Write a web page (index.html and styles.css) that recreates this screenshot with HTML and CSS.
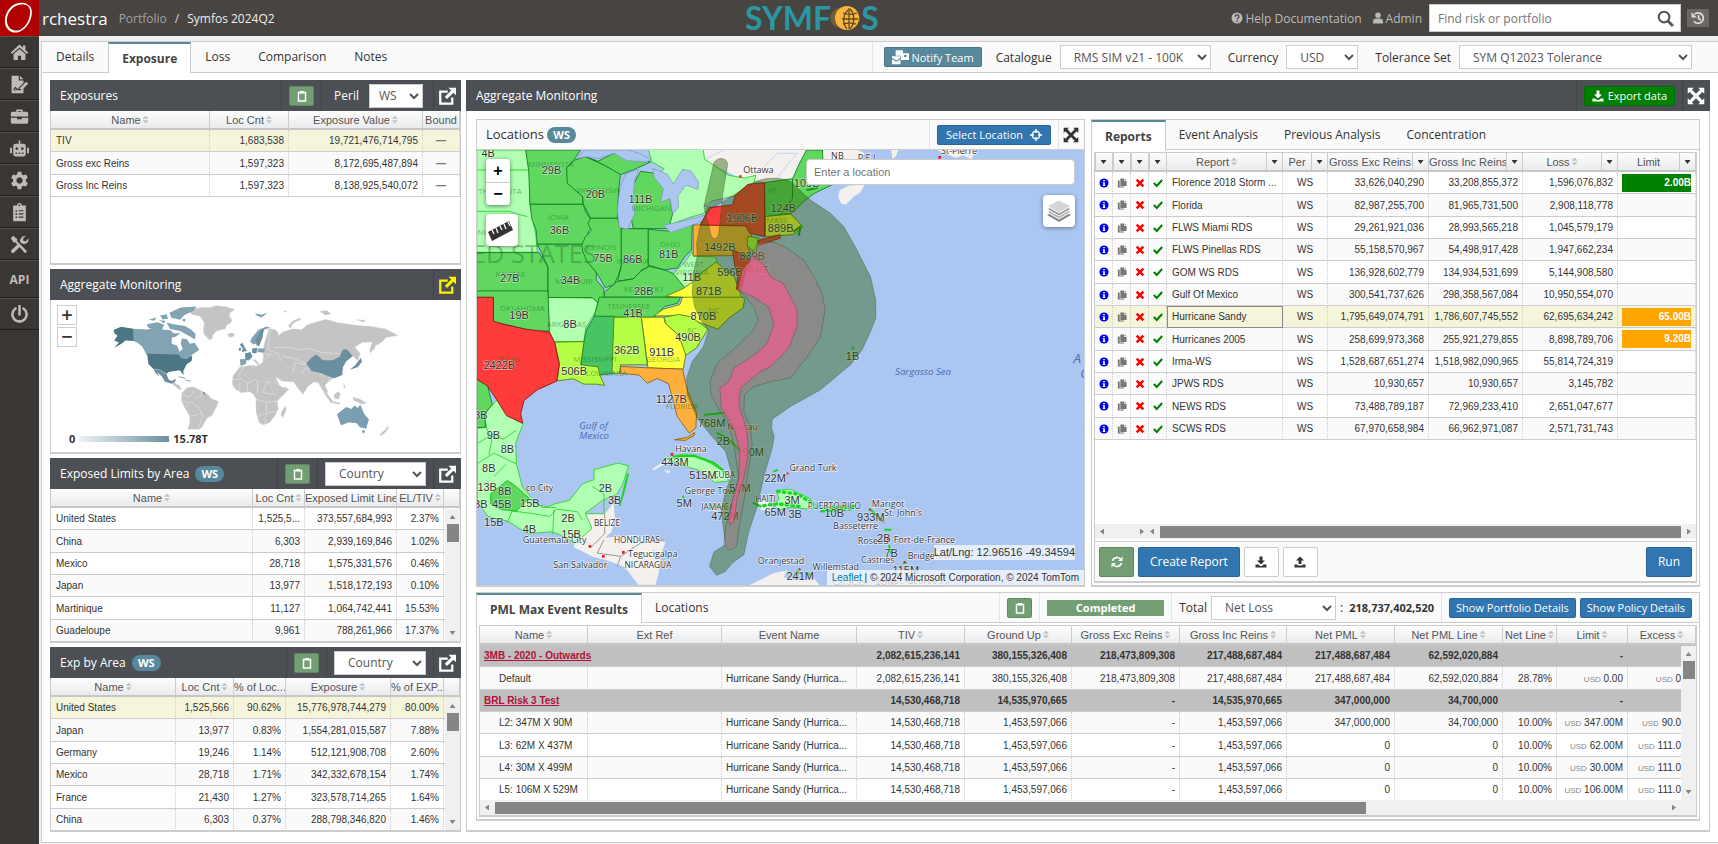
FILE: index.html
```html
<!DOCTYPE html>
<html lang="en">
<head>
    <meta charset="UTF-8">
    <meta name="viewport" content="width=device-width, initial-scale=1.0">
    <title>Orchestra - Symfos 2024Q2</title>
    <link rel="stylesheet" href="styles.css">
</head>
<body>
    <!-- Icon sprite -->
    <svg class="sprite" aria-hidden="true">
        <symbol id="i-home" viewBox="0 0 24 24"><path d="M12 2 1 12l1.6 1.8L12 5.6l9.400 8.200L23 12l-3.500-3.200V3h-3v3z"/><path d="M12 7.500 4.500 14v7.500H10V16h4v5.500h5.500V14z"/></symbol>
        <symbol id="i-sign" viewBox="0 0 24 24"><path d="M2 1h9v6h6v3l-6 6v3l3-.5 3-2.500V23H2zM12.500 1l4.500 4.500h-4.500z"/><path d="m12.500 16.500 8-8 2.500 2.500-8 8h-2.500z"/><path d="M4.500 19.500c2-5 3-5 3.200-1 1-2 2-1 2.500 0h4" fill="none" stroke="#3c3633" stroke-width="1.400"/></symbol>
        <symbol id="i-case" viewBox="0 0 24 24"><path d="M8 6V3h8v3h5a2 2 0 0 1 2 2v4H1V8a2 2 0 0 1 2-2zm2 0h4V5h-4zM1 13.500h8v2h6v-2h8V19a2 2 0 0 1-2 2H3a2 2 0 0 1-2-2z"/></symbol>
        <symbol id="i-robot" viewBox="0 0 24 24"><path fill-rule="evenodd" d="M11 2h2v4h4a3 3 0 0 1 3 3v10a3 3 0 0 1-3 3H7a3 3 0 0 1-3-3V9a3 3 0 0 1 3-3h4zM8.500 10.500a1.700 1.700 0 1 0 .1 0zm7 0a1.700 1.700 0 1 0 .1 0zM7 17v2h2v-2zm4 0v2h2v-2zm4 0v2h2v-2z"/><path d="M0 11h2.500v7H0zM21.500 11H24v7h-2.500z"/></symbol>
        <symbol id="i-cog" viewBox="0 0 24 24"><path fill-rule="evenodd" d="M9.700 1h4.600l.7 3.300 2 1.100 3.200-1 2.300 4-2.500 2.200v2.800l2.500 2.200-2.300 4-3.200-1-2 1.100-.7 3.300H9.700L9 19.700l-2-1.100-3.200 1-2.300-4L4 13.400v-2.800L1.500 8.400l2.300-4 3.200 1 2-1.100zM12 8a4 4 0 1 0 .01 0z"/></symbol>
        <symbol id="i-list" viewBox="0 0 24 24"><path fill-rule="evenodd" d="M9 3a3 3 0 0 1 6 0h5v20H4V3zm3-1a1 1 0 1 0 .01 0zM7 9v2h2V9zm4 0v1.500h6V9zm-4 4v2h2v-2zm4 0v1.500h6V13zm-4 4v2h2v-2zm4 0v1.500h6V17z"/></symbol>
        <symbol id="i-tools" viewBox="0 0 24 24"><path d="m1 4 3-3 5 4v3l12.500 12.500-2.500 2.500L7 9.500H4.500z"/><path d="m2 19 9-8.500 3 3L5 22a2 2 0 0 1-3-3zM13 9c-1-4 2-8 7-8l-3.500 3.500.5 3 3 .5L23.500 4.500C24 10 20 12 16 11z"/></symbol>
        <symbol id="i-power" viewBox="0 0 24 24"><path d="M7 4.500a9 9 0 1 0 10 0M12 1v11" fill="none" stroke="currentColor" stroke-width="3.200" stroke-linecap="round"/></symbol>
        <symbol id="i-clip" viewBox="0 0 24 24"><path d="M5 5h14v17H5z" fill="none" stroke="currentColor" stroke-width="3"/><path d="M8 2h8v5H8z"/></symbol>
        <symbol id="i-ext" viewBox="0 0 24 24"><path d="M13 6H3v16h16v-8" fill="none" stroke="currentColor" stroke-width="3"/><path d="M14 1h10v10l-3.500-3.500L12 16l-3-3 8.500-8.500z"/></symbol>
        <symbol id="i-full" viewBox="0 0 24 24"><path d="M1 1h8L6.500 3.500 12 9l5.500-5.500L15 1h8v8l-2.500-2.500L15 12l5.500 5.500L23 15v8h-8l2.500-2.500L12 15l-5.500 5.500L9 23H1v-8l2.500 2.500L9 12 3.500 6.500 1 9z"/></symbol>
        <symbol id="i-target" viewBox="0 0 24 24"><circle cx="12" cy="12" r="7.500" fill="none" stroke="currentColor" stroke-width="2.800"/><path d="M10.600 0h2.800v8h-2.800zM10.600 16h2.800v8h-2.800zM0 10.600h8v2.800H0zM16 10.600h8v2.800h-8z"/></symbol>
        <symbol id="i-down" viewBox="0 0 24 24"><path d="M9 1h6v8h5l-8 8-8-8h5zM1 17h6l3 3h4l3-3h6v6H1z"/></symbol>
        <symbol id="i-up" viewBox="0 0 24 24"><path d="M9 16h6V9h5l-8-8-8 8h5zM1 17h6v2h10v-2h6v6H1z"/></symbol>
        <symbol id="i-sync" viewBox="0 0 24 24"><path d="M3 10a9.500 9.500 0 0 1 16-4M21 14a9.500 9.500 0 0 1-16 4" fill="none" stroke="currentColor" stroke-width="3.400"/><path d="M23 1v9h-9zM1 23v-9h9z"/></symbol>
        <symbol id="i-search" viewBox="0 0 24 24"><circle cx="10" cy="10" r="7.500" fill="none" stroke="currentColor" stroke-width="3"/><path d="m15.500 15.500 7 7" stroke="currentColor" stroke-width="4"/></symbol>
        <symbol id="i-user" viewBox="0 0 24 24"><circle cx="12" cy="6.500" r="5.500"/><path d="M2 23v-4c0-4 3-6 6-6h8c3 0 6 2 6 6v4z"/></symbol>
        <symbol id="i-hist" viewBox="0 0 24 24"><path d="M6 5.500a9 9 0 1 1-1 12M13 7v6l4 2.500" fill="none" stroke="currentColor" stroke-width="3"/><path d="M1 2v9h9z"/></symbol>
        <symbol id="i-help" viewBox="0 0 24 24"><circle cx="12" cy="12" r="11"/><path d="M8.500 9.500c0-5 7.500-4.500 7.500-.5 0 2.500-3.500 2.500-3.500 5.500" fill="none" stroke="#474442" stroke-width="2.600"/><circle cx="12.400" cy="18" r="1.700" fill="#474442"/></symbol>
        <symbol id="i-mail" viewBox="0 0 28 24"><path fill-rule="evenodd" d="M6 0h12v5h10v11H15V9H6zM20 8v3h4V8z"/><path d="M0 10h14v3l-7 4-7-4zM0 15l7 4 7-4v8H0z"/></symbol>
        <symbol id="i-info" viewBox="0 0 24 24"><circle cx="12" cy="12" r="11"/><path d="M10 5h4v3h-4zM9 10h5v7h1v2H9v-2h1v-5H9z" fill="#fff"/></symbol>
        <symbol id="i-copy" viewBox="0 0 24 24"><path d="M8 1h9v6h6v12H8zM18.500 1 23 5.500h-4.500z"/><path d="M2 6h4.500v14.500H17V23H2z"/></symbol>
        <symbol id="i-x" viewBox="0 0 24 24"><path d="m4 4 16 16M20 4 4 20" stroke="currentColor" stroke-width="6"/></symbol>
        <symbol id="i-check" viewBox="0 0 24 24"><path d="m2 12 7 7L22 5" fill="none" stroke="currentColor" stroke-width="5"/></symbol>
    </svg>

    <header class="topbar">
        <a href="#" class="logo" aria-label="Home"><svg viewBox="0 0 39 36"><path fill="#fff" fill-rule="evenodd" d="M19 3C10 4 4 14 5 23c1 8 9 12 16 8 8-4 13-16 10-23-2-4-7-6-12-5zm-1 2c6-2 11 0 12 5 1 8-4 17-10 20-6 2-12-1-13-8C6 15 11 7 18 5z"/><path d="M12 8c4-4 9-5 13-4" fill="none" stroke="#fff"/></svg></a>
        <span class="brand">rchestra</span>
        <nav class="crumbs"><a href="#">Portfolio</a><span>/</span><b>Symfos 2024Q2</b></nav>
        <div class="symfos"><span>SYMF</span><svg viewBox="0 0 32 28"><ellipse cx="15" cy="14" rx="15" ry="11" fill="#a87a2c" opacity=".45"/><circle cx="17" cy="14" r="12" fill="#fbb53c"/><path d="M18 6c-5 5-6 13-1 19M20 5c5 5 5 14 0 20M19 4v21M13 9c5 2 9 2 14 0M12 15h16M13 20c5-1 10-1 13 0" fill="none" stroke="#5c4a26" stroke-width="1.300"/></svg><span>S</span></div>
        <div class="top-right">
            <a href="#"><svg class="ico"><use href="#i-help"/></svg> Help Documentation</a>
            <a href="#"><svg class="ico"><use href="#i-user"/></svg> Admin</a>
            <label class="find"><input type="text" placeholder="Find risk or portfolio" aria-label="Find risk or portfolio"><svg><use href="#i-search"/></svg></label>
            <button class="history" aria-label="History"><svg><use href="#i-hist"/></svg></button>
        </div>
    </header>

    <div class="shell">
        <nav class="sidebar">
            <a href="#" aria-label="Home"><svg><use href="#i-home"/></svg></a>
            <a href="#" aria-label="Contracts"><svg><use href="#i-sign"/></svg></a>
            <a href="#" aria-label="Portfolios"><svg><use href="#i-case"/></svg></a>
            <a href="#" aria-label="Automation"><svg><use href="#i-robot"/></svg></a>
            <a href="#" aria-label="Settings"><svg><use href="#i-cog"/></svg></a>
            <a href="#" aria-label="Tasks"><svg><use href="#i-list"/></svg></a>
            <a href="#" aria-label="Tools"><svg><use href="#i-tools"/></svg></a>
            <a href="#" class="api">API</a>
            <a href="#" aria-label="Log out"><svg><use href="#i-power"/></svg></a>
        </nav>

        <main class="page">
            <div class="tabbar">
                <a href="#" class="tab first">Details</a>
                <a href="#" class="tab active">Exposure</a>
                <a href="#" class="tab">Loss</a>
                <a href="#" class="tab">Comparison</a>
                <a href="#" class="tab">Notes</a>
                <div class="page-tools">
                    <button class="btn teal"><svg class="mail"><use href="#i-mail"/></svg>Notify Team</button>
                    <label for="catalogue">Catalogue</label>
                    <select id="catalogue" class="w-cat"><option>RMS SIM v21 - 100K</option></select>
                    <label for="currency">Currency</label>
                    <select id="currency" class="w-cur"><option>USD</option></select>
                    <label for="tolerance">Tolerance Set</label>
                    <select id="tolerance" class="w-tol"><option>SYM Q12023 Tolerance</option></select>
                </div>
            </div>

            <div class="content">
                <div class="left">
                    <section class="panel">
                        <div class="panel-head">
                            <h2>Exposures</h2>
                            <div class="tool"><button class="btn green clip" aria-label="Copy"><svg><use href="#i-clip"/></svg></button></div>
                            <div class="tool peril"><label for="peril">Peril</label><select id="peril"><option>WS</option></select></div>
                            <div class="tool last"><button class="icon-btn" aria-label="Open"><svg><use href="#i-ext"/></svg></button></div>
                        </div>
                        <div class="panel-body">
                            <table class="grid">
                                <colgroup><col><col style="width:79px"><col style="width:134px"><col style="width:37px"></colgroup>
                                <thead><tr><th><span class="sort">Name</span></th><th><span class="sort">Loc Cnt</span></th><th><span class="sort">Exposure Value</span></th><th>Bound</th></tr></thead>
                                <tbody>
                                    <tr class="sel"><td>TIV</td><td>1,683,538</td><td>19,721,476,714,795</td><td class="dash">—</td></tr>
                                    <tr><td>Gross exc Reins</td><td>1,597,323</td><td>8,172,695,487,894</td><td class="dash">—</td></tr>
                                    <tr><td>Gross Inc Reins</td><td>1,597,323</td><td>8,138,925,540,072</td><td class="dash">—</td></tr>
                                </tbody>
                            </table>
                        </div>
                    </section>

                    <section class="panel">
                        <div class="panel-head">
                            <h2>Aggregate Monitoring</h2>
                            <div class="tool last"><button class="icon-btn yellow" aria-label="Open"><svg><use href="#i-ext"/></svg></button></div>
                        </div>
                        <div class="panel-body world">
                            <svg class="world-map" viewBox="152 122 1230 456" role="img" aria-label="World exposure">
                                <g fill="#c4c4c4" stroke="#ddd" stroke-width="1">
                                    <path d="M565 155l35-12 30 1 20-6 30 4 25 8-15 10-2 12 8 8-3 10-14 8-2 10-27 7-10 10-4 14-8 3-16-18-2-14 3-20-13-20-22-4z"/>
                                    <path d="M683 224l12-4 10 5-5 7-12 2z"/>
                                    <path d="M520 368l16 10 9 12-6 1-20-15z"/>
                                    <path d="M545 403l15-18 20-3 12 6 18 9 16 10 5 9 25 11-7 18-13 24-16 9-12 22-8 10h-37l6-18v-22l-15-25-10-22z"/>
                                    <path d="M548 405l22 8 12-20M555 445l18-18 24 20 12 25-12 28M572 470l25-4M605 397v12l-22 8M545 425l20 4" fill="none" stroke="#eee" stroke-width="1.500"/>
                                    <path d="M720 322l40-5 15 8 10 7 20-4 13 4 17 38 10 17 17-4-12 24-17 18 2 25-10 20-15 20-20 7-12-7-9-30-1-20 1-20-8-15-12-8-25 3-17-10-10-15 2-25z"/>
                                    <path d="M844 460l12-20 4 10-10 24-6-5z"/>
                                    <path d="M735 320l-20 30 28 22 30-14 30 12 30 2M758 320v38M803 330v34M743 372v24M773 358v44M800 370l-10 30 25 5 28-12M770 420l30 10 33-5M800 430v30l-25 12M803 460l28-4M800 462l-5 32M720 360h-20M720 395v-28" fill="none" stroke="#eee" stroke-width="1.500"/>
                                    <path d="M808 207l20 4 8 10-2 8 16-12 30-9 26 2 18-15 55-16 35 10 50 8 55 4 40 8 37 19-36 6-12 14-22 12-13 22-3-10 8-24-30 1-22 14 16 20-8 22-20-22-35 30-8 38-20 12-15 15 8 18-2 10-14-14-12-22-14-2-18 14-14 24-16-20-12-18-34-2-20-12-8 6 4 10 24 14 20 6-25 24-18-6-10-26-4-18-22 4-24-8-6 8-8-4-10-16-6-8 8-6 10 2 6-12 20-8 10-8 2-18-2-14 4-22z"/>
                                    <path d="M866 200q12-22 38-24l-2 6q-24 4-30 24zM960 155l22-2 12 10-16 4zM1068 180l30 2-6 6zM850 156l12-2-4 5zM765 300l14 14-3 4-15-14zM1115 272l16-22-6 18-8 8z"/>
                                    <path d="M970 397l14 8 18 24-8 2zM1000 426l22 5-2 4-20-4zM1003 408l10-10 10 4-6 18-12-2zM1060 414l20 5 22 12-14 4-26-12zM1032 370l5 14-4 4zM1140 526l26-22-6 14-16 12zM1160 502l8 3-6 8z"/>
                                    <path d="M820 265l50-2 30 8 30-4 36 12 54 4M812 210l-8 60 30 12 12 25M850 290l30 6 38 16M880 340l5-30 33 6M905 345l14-20 26 12M785 282l40 6M795 300l20-16M975 352l-14-10M995 368l-8-14" fill="none" stroke="#eee" stroke-width="1.500"/>
                                </g>
                                <g fill="#82a3b1">
                                    <path d="M400 208l40 2 30-5 22 6 18 1 12 10 20-3-14 12-13 4v18l16 5 8 19 9-8-6-18 4-14 14 2 10 14 14-3 14 22-22 14-5 7-30 9-8-14-94-2-12-24-15-12-14-6z"/>
                                    <path d="M500 190l30 6 25 4 18 10 14 14-2 16-20-12-25-13-30-6zM508 160l34-16 48-3-8 12-30 14-12 14-26-6zM440 194l32-6 20 8-6 14-24 2-18-8zM446 180l24-6-8 10zM480 168l20-4 4 14-16 2zM478 182l18 2-4 8zM545 180l12-2-4 10z"/>
                                    <path d="M720 300l20-1-2 16-16 4zM773 267l22 0-2 13-20-2zM780 230l14-20 18-5-12-4-24 10-20 24-5 12 10 8 12-4z"/>
                                    <path d="M765 162l20 4 18-6-10 8-8 6-14-6zM1012 465l28-22 15 6 10-10 10 7 7-10 12 28 14 16-8 28-18-3-12-14-24-1-22 8z" fill="#7a9eb2"/>
                                    <path d="M1088 515h8l-4 7zM536 352l20 5M556 362l16 4" stroke="#82a3b1" stroke-width="3"/>
                                </g>
                                <g fill="#6a90a0">
                                    <path d="M460 330l20 2 20 13 5 15 10 5 13-7-3 10-10 5-20-6-10-16-15-13 8 14-10-8z"/>
                                    <path d="M920 312l15-17 15-10 20 18h30l20-11 10-22 12 0 18 20-20 16-10 17-2 24-23 10-20-7-25-10-25-5z"/>
                                    <path d="M720 255l8-5 7 15 7 10-17 3 4-10zM718 265l6 0-2 10-6-2zM735 282l17-4 6 14-13 12-8-4zM757 267l15-2-2 17-13-1zM770 258l-2-18 16-28 8-2-4 26-10 24zM1084 295l3 12-12 16-24 8 16-14zM608 398l8 2-3 8z"/>
                                </g>
                                <g fill="#4d7685">
                                    <path d="M340 212l22-10 38 6v37l-24-2-12 10-22 12 14-16-14-6 10-14-10-8z"/>
                                    <path d="M441 283l94 2 10 12h15l17-8-2 16-15 10-10 20 1 12-12-14-34 5-5 5-20-12-20-2-15-15z"/>
                                </g>
                            </svg>
                            <div class="world-zoom"><button aria-label="Zoom in">+</button><button aria-label="Zoom out">−</button></div>
                            <div class="legend"><span>0</span><i></i><span>15.78T</span></div>
                        </div>
                    </section>

                    <section class="panel">
                        <div class="panel-head">
                            <h2>Exposed Limits by Area <span class="badge">WS</span></h2>
                            <div class="tool"><button class="btn green clip" aria-label="Copy"><svg><use href="#i-clip"/></svg></button></div>
                            <div class="tool"><select class="w-area" aria-label="Area"><option>Country</option></select></div>
                            <div class="tool last"><button class="icon-btn" aria-label="Open"><svg><use href="#i-ext"/></svg></button></div>
                        </div>
                        <div class="panel-body">
                            <table class="grid">
                                <colgroup><col><col style="width:52px"><col style="width:92px"><col style="width:47px"><col style="width:16px"></colgroup>
                                <thead><tr><th><span class="sort">Name</span></th><th><span class="sort">Loc Cnt</span></th><th>Exposed Limit Line</th><th><span class="sort">EL/TIV</span></th><th></th></tr></thead>
                                <tbody>
                                    <tr><td>United States</td><td>1,525,5...</td><td>373,557,684,993</td><td>2.37%</td><td></td></tr>
                                    <tr><td>China</td><td>6,303</td><td>2,939,169,846</td><td>1.02%</td><td></td></tr>
                                    <tr><td>Mexico</td><td>28,718</td><td>1,575,331,576</td><td>0.46%</td><td></td></tr>
                                    <tr><td>Japan</td><td>13,977</td><td>1,518,172,193</td><td>0.10%</td><td></td></tr>
                                    <tr><td>Martinique</td><td>11,127</td><td>1,064,742,441</td><td>15.53%</td><td></td></tr>
                                    <tr><td>Guadeloupe</td><td>9,961</td><td>788,261,966</td><td>17.37%</td><td></td></tr>
                                </tbody>
                            </table>
                            <div class="vscroll"><i class="arr up"></i><b></b><i class="arr down"></i></div>
                        </div>
                    </section>

                    <section class="panel">
                        <div class="panel-head">
                            <h2>Exp by Area <span class="badge">WS</span></h2>
                            <div class="tool"><button class="btn green clip" aria-label="Copy"><svg><use href="#i-clip"/></svg></button></div>
                            <div class="tool"><select class="w-area2" aria-label="Area"><option>Country</option></select></div>
                            <div class="tool last"><button class="icon-btn" aria-label="Open"><svg><use href="#i-ext"/></svg></button></div>
                        </div>
                        <div class="panel-body">
                            <table class="grid">
                                <colgroup><col><col style="width:58px"><col style="width:52px"><col style="width:105px"><col style="width:53px"><col style="width:16px"></colgroup>
                                <thead><tr><th><span class="sort">Name</span></th><th><span class="sort">Loc Cnt</span></th><th>% of Loc...</th><th><span class="sort">Exposure</span></th><th>% of EXP...</th><th></th></tr></thead>
                                <tbody>
                                    <tr class="sel"><td>United States</td><td>1,525,566</td><td>90.62%</td><td>15,776,978,744,279</td><td>80.00%</td><td></td></tr>
                                    <tr><td>Japan</td><td>13,977</td><td>0.83%</td><td>1,554,281,015,587</td><td>7.88%</td><td></td></tr>
                                    <tr><td>Germany</td><td>19,246</td><td>1.14%</td><td>512,121,908,708</td><td>2.60%</td><td></td></tr>
                                    <tr><td>Mexico</td><td>28,718</td><td>1.71%</td><td>342,332,678,154</td><td>1.74%</td><td></td></tr>
                                    <tr><td>France</td><td>21,430</td><td>1.27%</td><td>323,578,714,265</td><td>1.64%</td><td></td></tr>
                                    <tr><td>China</td><td>6,303</td><td>0.37%</td><td>288,798,346,820</td><td>1.46%</td><td></td></tr>
                                </tbody>
                            </table>
                            <div class="vscroll"><i class="arr up"></i><b></b><i class="arr down"></i></div>
                        </div>
                    </section>
                </div>

                <section class="panel right">
                    <div class="panel-head">
                        <h2>Aggregate Monitoring</h2>
                        <div class="tool"><button class="btn export"><svg><use href="#i-down"/></svg>Export data</button></div>
                        <div class="tool last"><button class="icon-btn" aria-label="Full screen"><svg><use href="#i-full"/></svg></button></div>
                    </div>
                    <div class="right-body">
                        <section class="card">
                            <div class="card-head">
                                <h3>Locations <span class="badge">WS</span></h3>
                                <div class="tool"><button class="btn blue select-loc">Select Location <svg><use href="#i-target"/></svg></button></div>
                                <div class="tool last"><button class="icon-btn dark" aria-label="Full screen"><svg><use href="#i-full"/></svg></button></div>
                            </div>
                            <div class="map">
                                <svg class="map-svg" viewBox="18 120 1824 1306" preserveAspectRatio="xMidYMid slice" role="img" aria-label="Locations map">
                                    <rect x="18" y="120" width="1824" height="1310" fill="#abc6f1"/>
                                    <!-- uncovered land -->
                                    <g fill="#f3f0ed">
                                        <path d="M690 120h410l60-2 22 12-14 30-30 22-40 20-80 10-70 0-60 5-80-12-60-30-50-25z"/>
                                        <path d="M1108 240l30-14 45-2-14 24-20 12-22 24-14-2-10-20zM1262 120l22 0-8 20-10 8zM1165 150l60 4-50 8zM1400 120h120l-18 28-24-12-22 8z"/>
                                        <path d="M345 1212h58l26-32 4 44-10 42-20 18 90-8 92 22-12 30-8 60-10 37h-52l-40-52-50-20-46-12-58-28 20-60z"/>
                                        <path d="M545 1078l50-34 8 10-30 14-24 14zM580 1080l20 4-6 8zM855 1180l30-12 20 26-10 10-24-4zM830 1430l80-40 40-8-10 20 30 10 60-6 20 24z"/>
                                    </g>
                                    <path d="M700 150l60-30M860 190l60-60 60 0M920 205l30-40 30-35" fill="none" stroke="#c3d6f5" stroke-width="3"/>
                                    <path d="M402 1212v60l-40 40M400 1290l-20 40 70 10 60-40 70-10M450 1340l-10 30" fill="none" stroke="#999" stroke-width="3"/>
                                    <!-- light green areas -->
                                    <g fill="#b0ffb2" stroke="#22d522" stroke-width="2.500">
                                        <path d="M18 120h147l12 60 1 103 7 40 10 50 5 54H18z"/>
                                        <path d="M18 180h157M18 304h98l22 8 32 8" fill="none"/>
                                        <path d="M533 118h165l4 30 38 24 34 24 48 8 34-8-6 24-50 36-78 18-22 36-48 14-52 20-10-16 14-42-4-20-2-30-16-28-8-24 6-8-36-20z"/>
                                        <path d="M665 425l-20 30-42 42 2 28 34 16 26-22 34-32 40-30-4-16-66-2z"/>
                                        <path d="M232 562l153 3-10 40-30 50-5 40h-90l-14-30z"/>
                                        <path d="M65 885l15-15 30 48 47 24-22 58 2 62 18 70 44 52 30 8 25-10 42-10 40-50 34-12 0-30 72-20 32 8-18 56-18 30-42 18-52 38 20 46-52 46-32-22-36-14-72 6-62-38-58-14-32-44V955l28-2-8-38z"/>
                                        <path d="M22 1000l36-22 40 10 38-26M22 1060l48-30 66 32M45 950l18 42-8 44M70 1100l36-36M365 1130l35 22v60M345 1212h56M110 1238l14-34 50 6 64 10 20-22 62 8 14 24M250 1200l-4 74M170 1165l46 28 40 0" fill="none"/>
                                        <path d="M590 1048l50-16 60 16 62 38 12 28-42 4-44-36-50-14z"/>
                                        <path d="M918 1142l40-4 30 14 30 14 22 26-34 6-40-6-40 8-20-16 20-14z"/>
                                    </g>
                                    <!-- green states -->
                                    <g fill="#60d860" stroke="#0c7a18" stroke-width="2.500">
                                        <path d="M165 120h165l-18 26-24 28 4 46 44 40 1 23H178l-4-100z"/>
                                        <path d="M312 150l34-10 56 26 48 26-6 48-4 85h-80l-22-42-2-23-46-40-2-46z"/>
                                        <path d="M346 140l36 14 46-24 46 10 66 16-44 20-46 18-48-28z"/>
                                        <path d="M178 283h159l10 26 24 34-18 22-8 38H200l-4-44-12-30z"/>
                                        <path d="M18 428h187l14 22 13 22v73H18z"/>
                                        <path d="M200 403h135l16 50 26 36 0 22 22 24 2 26-18 20-18-18H232v-92z"/>
                                        <path d="M360 325h80l12 34v110l-10 30-12 26-26 8-6-10-20-34-28-34-14-30-2-22 10-22 18-20-10-20z"/>
                                        <path d="M452 356h81v114l-22 12-20 24-50 8 11-46z"/>
                                        <path d="M533 358l66 6 66-20-2 76-22 22-20 32-38 6-50-14z"/>
                                        <path d="M490 220l20-36 42 6 28 30-4 50 22-8 8 50-12 44H488l-10-50z"/>
                                        <path d="M402 546l38-31 48-8 24-24 24-14 48 12 24 10 36 44-46 24-10 3H400z"/>
                                        <path d="M386 562h244l-8 18-40 10-30 32H370z"/>
                                        <path d="M18 543h214l4 120-40 2-44-10-60-14-24-6v-72H18z"/>
                                        <path d="M340 695l8-36 24-40h60l-6 172-40 4-10-24h-46z" fill="#48c462"/>
                                        <path d="M882 218l84-12 20-44 22-42h48l2 50 24 56-50 24-30 22-38 38-80 10z"/>
                                        <path d="M966 206v60l-36 50" fill="none"/>
                                        <path d="M18 808l32 18 15 58-24 28 4 40-27 2z"/>
                                        <path d="M60 1152l50-40 28 20 36 32-36 40-44-4-34-18z" stroke="#0b0"/>
                                    </g>
                                    <g fill="#abc6f1" stroke="#7d94b5" stroke-width="2">
                                        <path d="M318 146l24-26h130l34 10 36 18-14 8-60-4-38-22-48 16-34-6z"/>
                                        <path d="M464 192l40-14-12 34-4 46 4 54-22 46-24-6-6-52 8-66z"/>
                                        <path d="M546 176l44 16 18 30 28-44 26 6 22 32-2 22-36-12-24 32 2 34-18 20-8-46-28 10 8-40-26-32z"/>
                                        <path d="M580 346l56-12 46-12 40-12-16 20-64 24-42 14z"/>
                                        <path d="M700 288l30-16 66-14-10 26-64 8z"/>
                                    </g>
                                    <g stroke="#4b7a12" stroke-width="2.500">
                                        <path fill="#ffff3e" d="M584 560l54-24 26-18 28-28 44-34 56 46 20 56 10 10-4 26-40 28-36 36-44-16-72-24h-76l28-20 50-14 8-22z"/>
                                        <path d="M590 562h226" fill="none"/>
                                        <path fill="#ffff3e" d="M512 622h68l4 18 40 34 24 46-10 58-106-4z"/>
                                        <path fill="#b4ff46" d="M580 622l44-8 36 6 52 38-34 56-32 22-22-60-38-34z"/>
                                        <path fill="#b4ff46" d="M430 622h82l18 143h-80l-4 26-22-2zM252 697l88-2-10 70 52 6 6 26 14 30-22-4-40 0-32-16-48 6 6-54z"/>
                                        <path fill="#ffff3e" d="M885 320l76-8 28 30 8 10-30 22-82 6z"/>
                                        <path fill="#ffb03c" stroke="#8a5a10" d="M668 345h164l12 34-14 26 10 24-12 8-160 1z"/>
                                        <path fill="#b4ff46" d="M832 378l32 8-8 44-26-22z"/>
                                        <path fill="#ffb03c" stroke="#8a5a10" d="M450 770l80 4 106 4 14 62 28 68-2 46-20 16-36-50-14-54-12-44-34-16-30 14-24-24-56-6zM612 990l40-8 20-14-2 10-26 14z"/>
                                        <path fill="#ff3c3c" stroke="#8a1010" d="M690 345l26-52 70-8 8-28 38-34 50-5v162l-44-10-12-22zM862 392l66-18 2 10-64 22zM786 420l48 22 6 20-18 30-14 50-10-4 4-40-10-34zM18 562h50v72l26 8 70 16 72 8 16 32 14 68-8 48-58 26-40 32-10 40 6 28-48-22-30-48-28-42-32-20z"/>
                                    </g>
                                    <!-- islands -->
                                    <g fill="none" stroke="#16d61c" stroke-linecap="round">
                                        <path d="M610 1040l60-2 60 22 38 30M850 1180l20 10" stroke-width="7"/>
                                        <path d="M922 1145l60 8 46 30M880 1188l40-6 70 8" stroke-width="10" stroke-dasharray="4 13"/>
                                        <path d="M1060 1194l96-4M1054 1204l86-6" stroke-width="9" stroke-dasharray="10 10"/>
                                        <path d="M725 1190l44 0M704 915l60-6M740 970l30 14 40 40M1146 712l2 4M1200 1200l40 36M1244 1260l16 0M1256 1308l6 22M1300 1360l6 0M980 1385l4 4M1010 1390l8 6M638 1160v4M910 1085l10-4M472 1094l-14 56-10 36" stroke-width="6"/>
                                        <path d="M1010 240l30-6M990 350l-20 14M985 375l4-18" stroke-width="6" stroke="#1a9a1a"/>
                                    </g>
                                    <!-- base map names -->
                                    <g class="region">
                                        <text x="172" y="172">MINNESOTA</text><text x="22" y="252">TH DAKOTA</text><text x="318" y="248">WISCONSIN</text><text x="482" y="302">MICHIGAN</text><text x="232" y="330">IOWA</text><text x="342" y="420">ILLINOIS</text><text x="568" y="410">OHIO</text><text x="438" y="462">INDIANA</text><text x="74" y="500">KANSAS</text><text x="254" y="522">MISSOURI</text><text x="460" y="545">KENTUCKY</text><text x="88" y="604">OKLAHOMA</text><text x="410" y="598">TENNESSEE</text><text x="228" y="650">ARKANSAS</text><text x="20" y="376">NEBR</text><text x="650" y="668">SC</text><text x="714" y="608">NC</text><text x="78" y="758">TEXAS</text><text x="308" y="758">MISSISSIPPI</text><text x="526" y="758">GEORGIA</text><text x="586" y="898">FLORIDA</text><text x="638" y="472">WEST</text><text x="614" y="494">VIRGINIA</text><text x="892" y="248">VT</text><text x="888" y="338">MASS</text><text x="346" y="798">LOUISIANA</text>
                                    </g>
                                    <text x="4" y="460" class="country">ED STATES</text>
                                    <g class="sea"><text x="326" y="957">Gulf of</text><text x="326" y="989">Mexico</text><text x="1274" y="797">Sargasso Sea</text><text x="1810" y="760" class="big">A</text><text x="1830" y="806" class="big">O</text></g>
                                    <g class="place">
                                        <text x="818" y="188">Ottawa</text><text x="1082" y="148">NB</text><text x="1162" y="154">P.E.I.</text><text x="1412" y="132">St-Pierre</text><text x="614" y="1026">Havana</text><text x="770" y="960" fill="#8a2020">Nassau</text><text x="165" y="1144">co City</text><text x="642" y="1152">George Town</text><text x="156" y="1300">Guatemala City</text><text x="248" y="1374">San Salvador</text><text x="472" y="1341">Tegucigalpa</text><text x="956" y="1083">Grand Turk</text><text x="1204" y="1191">Marigot</text><text x="1241" y="1220">St. John's</text><text x="1088" y="1259">Basseterre</text><text x="1162" y="1302">Roseau</text><text x="1270" y="1301">Fort-de-France</text><text x="1172" y="1360">Castries</text><text x="1312" y="1348">Bridgetown</text><text x="1026" y="1382">Willemstad</text><text x="862" y="1364">Oranjestad</text><text x="1086" y="1426">Caracas</text><text x="1270" y="1424">St. George's</text>
                                        <g class="caps"><text x="370" y="1250">BELIZE</text><text x="430" y="1300">HONDURAS</text><text x="462" y="1375">NICARAGUA</text><text x="692" y="1202">JAMAICA</text><text x="854" y="1176">HAITI</text><text x="1012" y="1199">PUERTO RICO</text><text x="728" y="1104">CUBA</text><text x="828" y="490" fill="#b02020">WARE</text></g>
                                    </g>
                                    <g fill="#d22"><path d="M806 196h7v7h-7zM354 1306h8v8h-8zM394 1336h8v8h-8zM454 1324h8v8h-8zM600 1030h8v8h-8zM1404 138h8v8h-8zM948 1088h6v6h-6zM1195 1196h6v6h-6zM1232 1230h6v6h-6zM1300 1354h6v6h-6zM984 1376h6v6h-6zM1250 1285h6v6h-6z"/></g>
                                    <g class="val">
                                        <text x="32" y="140">4B</text><text x="213" y="192">29B</text><text x="345" y="264">20B</text><text x="474" y="278">111B</text><text x="237" y="372">36B</text><text x="368" y="455">75B</text><text x="457" y="460">86B</text><text x="565" y="445">81B</text><text x="88" y="517">27B</text><text x="270" y="523">34B</text><text x="490" y="556">28B</text><text x="635" y="514">11B</text><text x="676" y="556">871B</text><text x="116" y="628">19B</text><text x="458" y="620">41B</text><text x="278" y="655">8B</text><text x="660" y="630">870B</text><text x="614" y="693">490B</text><text x="700" y="423">1492B</text><text x="768" y="337">1906B</text><text x="806" y="450">839B</text><text x="740" y="497">596B</text><text x="892" y="367">889B</text><text x="900" y="306">124B</text><text x="970" y="232">109B</text>
                                        <text x="430" y="732">362B</text><text x="536" y="738">911B</text><text x="38" y="778">2422B</text><text x="272" y="795">506B</text><text x="556" y="881">1127B</text><text x="682" y="952">768M</text><text x="738" y="1006">2B</text><text x="816" y="1038">90M</text><text x="572" y="1070">443M</text><text x="656" y="1108">515M</text><text x="776" y="1148">57M</text><text x="618" y="1192">5M</text><text x="722" y="1232">472M</text><text x="882" y="1116">22M</text><text x="882" y="1218">65M</text><text x="942" y="1182">3M</text><text x="954" y="1226">3B</text><text x="1062" y="1223">10B</text><text x="1160" y="1234">933M</text><text x="1220" y="1297">2B</text><text x="1242" y="1342">7B</text><text x="1266" y="1392">115M</text><text x="948" y="1411">241M</text><text x="1214" y="1426">19M</text><text x="1126" y="750">1B</text>
                                        <text x="10" y="928">8B</text><text x="48" y="987">9B</text><text x="90" y="1030">8B</text><text x="34" y="1086">8B</text><text x="20" y="1144">13B</text><text x="82" y="1155">8B</text><text x="10" y="1194">3B</text><text x="64" y="1194">45B</text><text x="148" y="1192">15B</text><text x="40" y="1249">15B</text><text x="156" y="1270">4B</text><text x="272" y="1236">2B</text><text x="272" y="1286">15B</text><text x="384" y="1146">2B</text><text x="412" y="1182">3B</text>
                                    </g>
                                    <!-- storm footprint -->
                                    <g stroke="#2a4a20" stroke-opacity=".5" stroke-width="2" stroke-linejoin="round">
                                        <path fill="#275c00" fill-opacity=".42" fill-rule="evenodd" d="M845 220Q880 202 920 205Q945 207 960 215L1020 270L1080 310L1120 350L1155 412L1200 500L1216 570V625L1200 665L1175 720L1140 765L1050 840L960 890L905 928L903 955L911 980L905 1015L880 1100L860 1190L835 1265L820 1335L785 1360L765 1385L738 1397L717 1370L730 1327L765 1305L752 1205L765 1145L785 1095L765 1025L720 975L680 925L650 855L648 805L665 755L698 712L714 662L690 630L672 590L665 550L668 490L680 440L678 400L690 340L720 298L790 255ZM730 158C742 138 774 144 771 166L757 250L746 360C742 394 724 394 719 366L700 290Z"/>
                                        <path fill="#c16b86" fill-opacity=".3" d="M862 396L915 398L950 415L1000 450L1030 500L1055 550L1064 600L1050 680L1025 720L1000 755L960 805L900 815L850 830L822 855L820 905L840 955L845 1005L830 1105L820 1175L805 1255L798 1310L778 1322L760 1305L765 1255L783 1185L805 1105L790 1005L775 945L742 895L722 855L718 815L740 760L805 705L845 665L863 632L850 592L812 545L828 470Z"/>
                                        <path fill="#f15a8c" fill-opacity=".7" d="M850 440L880 465L900 500L940 522L980 600V650L955 715L900 770L870 785L810 835L805 885L830 965L833 1035L820 1105L800 1165L790 1235L778 1245L775 1225L785 1175L805 1105L808 1025L790 955L752 895L748 835L775 815L790 775L860 730L890 700L910 645L895 592L850 562L802 540L815 480Z"/>
                                    </g>
                                </svg>
                                <div class="map-zoom"><button aria-label="Zoom in">+</button><button aria-label="Zoom out">−</button></div>
                                <button class="ruler" aria-label="Measure"><svg viewBox="0 0 32 32"><path d="m2 18 21-11 4 9L6 27z" fill="#333"/><path d="m6 16 2 4M10 14l2 5M14 12l2 4M18 10l2 5M22 8l2 4" stroke="#fff" stroke-width="1.300"/></svg></button>
                                <input class="map-search" type="text" placeholder="Enter a location" aria-label="Enter a location">
                                <button class="layers" aria-label="Layers"><svg viewBox="0 0 26 26"><path d="m13 11 12 6-12 7-12-7z" fill="#888"/><path d="m13 8 12 6-12 7-12-7z" fill="#b5b5b5" stroke="#fff"/><path d="m13 5 12 6-12 7-12-7z" fill="#999" stroke="#fff"/><path d="m13 2 12 6-12 7L1 8z" fill="#d6d6d6" stroke="#fff"/></svg></button>
                                <div class="latlng">Lat/Lng: 12.96516 -49.34594</div>
                                <div class="attribution"><a href="#">Leaflet</a> | © 2024 Microsoft Corporation, © 2024 TomTom</div>
                            </div>
                        </section>

                        <section class="card reports">
                            <div class="tabbar inner">
                                <a href="#" class="tab active">Reports</a>
                                <a href="#" class="tab">Event Analysis</a>
                                <a href="#" class="tab">Previous Analysis</a>
                                <a href="#" class="tab">Concentration</a>
                            </div>
                            <div class="framed">
                                <table class="grid report-grid">
                                    <colgroup><col class="c-ico"><col class="c-ico"><col class="c-ico"><col class="c-ico"><col><col style="width:45px"><col style="width:101px"><col style="width:94px"><col style="width:95px"><col style="width:78px"></colgroup>
                                    <thead><tr>
                                        <th><div><button aria-label="Filter"></button></div></th><th><div><button aria-label="Filter"></button></div></th><th><div><button aria-label="Filter"></button></div></th><th><div><button aria-label="Filter"></button></div></th>
                                        <th><div><span class="sort">Report</span><button aria-label="Filter"></button></div></th>
                                        <th><div><span>Per</span><button aria-label="Filter"></button></div></th>
                                        <th><div><span>Gross Exc Reins</span><button aria-label="Filter"></button></div></th>
                                        <th><div><span>Gross Inc Reins</span><button aria-label="Filter"></button></div></th>
                                        <th><div><span class="sort">Loss</span><button aria-label="Filter"></button></div></th>
                                        <th><div><span>Limit</span><button aria-label="Filter"></button></div></th>
                                    </tr></thead>
                                    <tbody>
                                        <tr><td class="info"><svg><use href="#i-info"/></svg></td><td class="copy"><svg><use href="#i-copy"/></svg></td><td class="del"><svg><use href="#i-x"/></svg></td><td class="ok"><svg><use href="#i-check"/></svg></td><td>Florence 2018 Storm ...</td><td>WS</td><td>33,626,040,290</td><td>33,208,855,372</td><td>1,596,076,832</td><td><span class="lim good">2.00B</span></td></tr>
                                        <tr><td class="info"><svg><use href="#i-info"/></svg></td><td class="copy"><svg><use href="#i-copy"/></svg></td><td class="del"><svg><use href="#i-x"/></svg></td><td class="ok"><svg><use href="#i-check"/></svg></td><td>Florida</td><td>WS</td><td>82,987,255,700</td><td>81,965,731,500</td><td>2,908,118,778</td><td></td></tr>
                                        <tr><td class="info"><svg><use href="#i-info"/></svg></td><td class="copy"><svg><use href="#i-copy"/></svg></td><td class="del"><svg><use href="#i-x"/></svg></td><td class="ok"><svg><use href="#i-check"/></svg></td><td>FLWS Miami RDS</td><td>WS</td><td>29,261,921,036</td><td>28,993,565,218</td><td>1,045,579,179</td><td></td></tr>
                                        <tr><td class="info"><svg><use href="#i-info"/></svg></td><td class="copy"><svg><use href="#i-copy"/></svg></td><td class="del"><svg><use href="#i-x"/></svg></td><td class="ok"><svg><use href="#i-check"/></svg></td><td>FLWS Pinellas RDS</td><td>WS</td><td>55,158,570,967</td><td>54,498,917,428</td><td>1,947,662,234</td><td></td></tr>
                                        <tr><td class="info"><svg><use href="#i-info"/></svg></td><td class="copy"><svg><use href="#i-copy"/></svg></td><td class="del"><svg><use href="#i-x"/></svg></td><td class="ok"><svg><use href="#i-check"/></svg></td><td>GOM WS RDS</td><td>WS</td><td>136,928,602,779</td><td>134,934,531,699</td><td>5,144,908,580</td><td></td></tr>
                                        <tr><td class="info"><svg><use href="#i-info"/></svg></td><td class="copy"><svg><use href="#i-copy"/></svg></td><td class="del"><svg><use href="#i-x"/></svg></td><td class="ok"><svg><use href="#i-check"/></svg></td><td>Gulf Of Mexico</td><td>WS</td><td>300,541,737,626</td><td>298,358,567,084</td><td>10,950,554,070</td><td></td></tr>
                                        <tr class="sel"><td class="info"><svg><use href="#i-info"/></svg></td><td class="copy"><svg><use href="#i-copy"/></svg></td><td class="del"><svg><use href="#i-x"/></svg></td><td class="ok"><svg><use href="#i-check"/></svg></td><td class="focus">Hurricane Sandy</td><td>WS</td><td>1,795,649,074,791</td><td>1,786,607,745,552</td><td>62,695,634,242</td><td><span class="lim warn">65.00B</span></td></tr>
                                        <tr><td class="info"><svg><use href="#i-info"/></svg></td><td class="copy"><svg><use href="#i-copy"/></svg></td><td class="del"><svg><use href="#i-x"/></svg></td><td class="ok"><svg><use href="#i-check"/></svg></td><td>Hurricanes 2005</td><td>WS</td><td>258,699,973,368</td><td>255,921,279,855</td><td>8,898,789,706</td><td><span class="lim warn">9.20B</span></td></tr>
                                        <tr><td class="info"><svg><use href="#i-info"/></svg></td><td class="copy"><svg><use href="#i-copy"/></svg></td><td class="del"><svg><use href="#i-x"/></svg></td><td class="ok"><svg><use href="#i-check"/></svg></td><td>Irma-WS</td><td>WS</td><td>1,528,687,651,274</td><td>1,518,982,090,965</td><td>55,814,724,319</td><td></td></tr>
                                        <tr><td class="info"><svg><use href="#i-info"/></svg></td><td class="copy"><svg><use href="#i-copy"/></svg></td><td class="del"><svg><use href="#i-x"/></svg></td><td class="ok"><svg><use href="#i-check"/></svg></td><td>JPWS RDS</td><td>WS</td><td>10,930,657</td><td>10,930,657</td><td>3,145,782</td><td></td></tr>
                                        <tr><td class="info"><svg><use href="#i-info"/></svg></td><td class="copy"><svg><use href="#i-copy"/></svg></td><td class="del"><svg><use href="#i-x"/></svg></td><td class="ok"><svg><use href="#i-check"/></svg></td><td>NEWS RDS</td><td>WS</td><td>73,488,789,187</td><td>72,969,233,410</td><td>2,651,047,677</td><td></td></tr>
                                        <tr><td class="info"><svg><use href="#i-info"/></svg></td><td class="copy"><svg><use href="#i-copy"/></svg></td><td class="del"><svg><use href="#i-x"/></svg></td><td class="ok"><svg><use href="#i-check"/></svg></td><td>SCWS RDS</td><td>WS</td><td>67,970,658,984</td><td>66,962,971,087</td><td>2,571,731,743</td><td></td></tr>
                                    </tbody>
                                </table>
                                <div class="hscroll rep-scroll"><i class="arr prev"></i><span></span><i class="arr next"></i><i class="arr prev"></i><b></b><i class="arr next"></i></div>
                                <div class="report-foot">
                                    <button class="btn green sq" aria-label="Refresh"><svg><use href="#i-sync"/></svg></button>
                                    <button class="btn blue">Create Report</button>
                                    <button class="btn plain sq" aria-label="Download"><svg><use href="#i-down"/></svg></button>
                                    <button class="btn plain sq" aria-label="Upload"><svg><use href="#i-up"/></svg></button>
                                    <button class="btn blue run">Run</button>
                                </div>
                            </div>
                        </section>

                        <section class="card pml">
                            <div class="tabbar inner">
                                <a href="#" class="tab active">PML Max Event Results</a>
                                <a href="#" class="tab">Locations</a>
                                <div class="tool push"><button class="btn green clip" aria-label="Copy"><svg><use href="#i-clip"/></svg></button></div>
                                <div class="tool"><span class="status">Completed</span></div>
                                <div class="tool total"><label for="total">Total</label><select id="total"><option>Net Loss</option></select><span>:</span><b>218,737,402,520</b></div>
                                <div class="tool last2"><button class="btn blue small">Show Portfolio Details</button><button class="btn blue small">Show Policy Details</button></div>
                            </div>
                            <div class="framed">
                                <div class="clipper">
                                    <table class="grid pml-grid">
                                        <colgroup><col style="width:108px"><col style="width:134px"><col style="width:135px"><col style="width:108px"><col style="width:107px"><col style="width:108px"><col style="width:107px"><col style="width:108px"><col style="width:108px"><col style="width:54px"><col style="width:71px"><col></colgroup>
                                        <thead><tr><th><span class="sort">Name</span></th><th>Ext Ref</th><th>Event Name</th><th><span class="sort">TIV</span></th><th><span class="sort">Ground Up</span></th><th><span class="sort">Gross Exc Reins</span></th><th><span class="sort">Gross Inc Reins</span></th><th><span class="sort">Net PML</span></th><th><span class="sort">Net PML Line</span></th><th><span class="sort">Net Line</span></th><th><span class="sort">Limit</span></th><th><span class="sort">Excess</span></th></tr></thead>
                                        <tbody>
                                            <tr class="group"><td><a href="#">3MB - 2020 - Outwards</a></td><td></td><td></td><td>2,082,615,236,141</td><td>380,155,326,408</td><td>218,473,809,308</td><td>217,488,687,484</td><td>217,488,687,484</td><td>62,592,020,884</td><td></td><td>-</td><td></td></tr>
                                            <tr><td>Default</td><td></td><td>Hurricane Sandy (Hurrica...</td><td>2,082,615,236,141</td><td>380,155,326,408</td><td>218,473,809,308</td><td>217,488,687,484</td><td>217,488,687,484</td><td>62,592,020,884</td><td>28.78%</td><td><small>USD</small> 0.00</td><td><small>USD</small> 0.00</td></tr>
                                            <tr class="group"><td><a href="#">BRL Risk 3 Test</a></td><td></td><td></td><td>14,530,468,718</td><td>14,535,970,665</td><td>-</td><td>14,535,970,665</td><td>347,000,000</td><td>34,700,000</td><td></td><td>-</td><td></td></tr>
                                            <tr><td>L2: 347M X 90M</td><td></td><td>Hurricane Sandy (Hurrica...</td><td>14,530,468,718</td><td>1,453,597,066</td><td>-</td><td>1,453,597,066</td><td>347,000,000</td><td>34,700,000</td><td>10.00%</td><td><small>USD</small> 347.00M</td><td><small>USD</small> 90.00M</td></tr>
                                            <tr><td>L3: 62M X 437M</td><td></td><td>Hurricane Sandy (Hurrica...</td><td>14,530,468,718</td><td>1,453,597,066</td><td>-</td><td>1,453,597,066</td><td>0</td><td>0</td><td>10.00%</td><td><small>USD</small> 62.00M</td><td><small>USD</small> 111.00M</td></tr>
                                            <tr><td>L4: 30M X 499M</td><td></td><td>Hurricane Sandy (Hurrica...</td><td>14,530,468,718</td><td>1,453,597,066</td><td>-</td><td>1,453,597,066</td><td>0</td><td>0</td><td>10.00%</td><td><small>USD</small> 30.00M</td><td><small>USD</small> 111.00M</td></tr>
                                            <tr><td>L5: 106M X 529M</td><td></td><td>Hurricane Sandy (Hurrica...</td><td>14,530,468,718</td><td>1,453,597,066</td><td>-</td><td>1,453,597,066</td><td>0</td><td>0</td><td>10.00%</td><td><small>USD</small> 106.00M</td><td><small>USD</small> 111.00M</td></tr>
                                        </tbody>
                                    </table>
                                    <div class="vscroll"><i class="arr up"></i><b></b><i class="arr down"></i></div>
                                </div>
                                <div class="hscroll pml-scroll"><i class="arr prev"></i><b></b><i class="arr next"></i></div>
                            </div>
                        </section>
                    </div>
                </section>
            </div>
        </main>
    </div>
</body>
</html>
```
FILE: styles.css
```css
* {
    box-sizing: border-box;
}
body {
    margin: 0;
    font-family: "Open Sans", sans-serif;
    font-size: 12px;
    color: #333;
    background: #f0f0f0;
    min-height: 100vh;
    display: flex;
    flex-direction: column;
}
a {
    color: inherit;
    text-decoration: none;
}
button, select, input {
    font-family: inherit;
    font-size: 12px;
    margin: 0;
}
svg {
    fill: currentColor;
    display: block;
}
.sprite {
    position: absolute;
    width: 0;
    height: 0;
}

/* Top bar */
.topbar {
    height: 36px;
    flex: none;
    background: #474442;
    color: #fff;
    display: flex;
    align-items: center;
    position: relative;
}
.logo {
    width: 39px;
    height: 36px;
    background: #b00000;
}
.brand {
    font-size: 17px;
    margin-left: 3px;
}
.crumbs {
    display: flex;
    gap: 8px;
    margin-left: 11px;
    color: #ddd;
}
.crumbs a {
    color: #a5a3a1;
}
.crumbs b {
    font-weight: 400;
    color: #eee;
}
.symfos {
    position: absolute;
    left: 745px;
    top: 0;
    height: 36px;
    display: flex;
    align-items: center;
    font: 700 32px/36px Lato, sans-serif;
    color: #2a97a3;
}
.symfos svg {
    width: 36px;
    height: 28px;
    margin: 0 -3px;
}
.top-right {
    margin-left: auto;
    margin-right: 9px;
    display: flex;
    align-items: center;
    gap: 10px;
    color: #bbb9b7;
}
.top-right a {
    display: flex;
    align-items: center;
    gap: 2px;
}
.ico {
    width: 12px;
    height: 12px;
}
.find {
    display: flex;
    align-items: center;
    width: 252px;
    height: 28px;
    margin-left: -3px;
    padding-right: 6px;
    background: #fff;
    border: 1px solid #ccc;
    color: #555;
}
.find input {
    flex: 1;
    min-width: 0;
    border: 0;
    padding: 0 8px;
    outline: 0;
}
.find input::placeholder, .map-search::placeholder {
    color: #757575;
}
.find svg {
    width: 17px;
    height: 17px;
}
.history {
    width: 22px;
    height: 18px;
    margin-left: -4px;
    padding: 2px 4px;
    border: 0;
    background: #6b6866;
    color: #ddd;
}
.history svg {
    width: 14px;
    height: 14px;
}

/* Sidebar */
.shell {
    display: flex;
    flex: 1;
}
.sidebar {
    width: 39px;
    flex: none;
    background: #3a3633;
    color: #c0bbb7;
}
.sidebar a {
    display: flex;
    align-items: center;
    justify-content: center;
    height: 32px;
    border-bottom: 1px solid #1f1c1a;
    border-top: 1px solid #56514d;
}
.sidebar svg {
    width: 19px;
    height: 19px;
}
.sidebar .api {
    height: 38px;
    font-weight: 700;
}

/* Page and tabs */
.page {
    flex: 1;
    min-width: 0;
    margin: 5px 0 1px 2px;
    background: #fff;
    border: 1px solid #ccc;
    border-right: 0;
}
.tabbar {
    display: flex;
    height: 31px;
    background: #fafafa;
    border-bottom: 1px solid #ccc;
}
.tab {
    padding: 6px 14px;
    line-height: 17px;
    white-space: nowrap;
}
.tab.active {
    margin-bottom: -1px;
    padding: 6px 13px;
    border-top: 2px solid #57889c;
    border-left: 1px solid #ccc;
    border-right: 1px solid #ccc;
    background: #fff;
    font-weight: 700;
    color: #444;
}
.page-tools {
    display: flex;
    align-items: center;
    margin-left: auto;
    margin-right: 26px;
    padding-left: 11px;
    border-left: 1px solid #e5e5e5;
}
.page-tools label {
    margin: 0 8px 0 17px;
}
.page-tools .teal + label {
    margin-left: 14px;
}
select {
    height: 24px;
    padding: 0 0 0 9px;
    border: 1px solid #ccc;
    border-radius: 0;
    background: #fff;
    color: #555;
}
.w-cat {
    width: 151px;
}
.w-cur {
    width: 72px;
}
.w-tol {
    width: 233px;
}

/* Buttons */
.btn {
    display: inline-flex;
    align-items: center;
    justify-content: center;
    gap: 4px;
    height: 20px;
    padding: 0 7px;
    border: 1px solid rgba(0, 0, 0, 0.15);
    border-radius: 2px;
    color: #fff;
    font-size: 11px;
    white-space: nowrap;
}
.btn svg {
    width: 12px;
    height: 12px;
}
.teal {
    background: #57889c;
    gap: 2px;
}
.btn .mail {
    width: 17px;
    height: 15px;
}
.green {
    background: #739e73;
}
.blue {
    background: #3276b1;
}
.export {
    background: #008000;
}
.plain {
    background: #fff;
    border-color: #ccc;
    color: #333;
}
.clip {
    width: 25px;
    padding: 0;
}
.icon-btn {
    padding: 0;
    border: 0;
    background: none;
    color: #fff;
}
.icon-btn svg {
    width: 18px;
    height: 18px;
}
.icon-btn.yellow {
    color: #fff200;
}
.icon-btn.dark {
    color: #333;
}
.icon-btn.dark svg {
    width: 16px;
    height: 16px;
}
.badge {
    display: inline-block;
    padding: 0 6px;
    border-radius: 8px;
    line-height: 16px;
    font-size: 11px;
    font-weight: 700;
    background: #57889c;
    color: #fff;
}
h2 .badge {
    margin-left: 3px;
}

/* Panels */
.content {
    display: flex;
    gap: 5px;
    padding: 7px 8px 8px;
}
.left {
    width: 411px;
    flex: none;
    display: flex;
    flex-direction: column;
    gap: 4px;
}
.panel {
    border: 1px solid #ccc;
    border-top: 0;
    border-bottom-width: 2px;
    background: #fff;
}
.panel-head {
    display: flex;
    height: 31px;
    margin: 0 -1px;
    background: #4c4f53;
    color: #fff;
}
h2, h3 {
    flex: 1;
    margin: 0;
    padding-left: 10px;
    font-size: 12px;
    line-height: 31px;
    font-weight: 400;
}
.tool {
    display: flex;
    align-items: center;
    padding: 0 7px;
    border-left: 1px solid rgba(0, 0, 0, 0.12);
}
.tool.last {
    padding: 0 5px 0 4px;
}
.tool.peril {
    padding: 0 10px 0 12px;
    gap: 10px;
}
.peril select {
    width: 54px;
    padding-left: 5px;
}
.w-area {
    width: 101px;
}
.w-area2 {
    width: 92px;
}
.panel-body {
    position: relative;
    height: 152px;
    overflow: hidden;
}

/* Data grids */
.grid {
    width: 100%;
    table-layout: fixed;
    border-collapse: separate;
    border-spacing: 0;
    font: 10px "Liberation Sans", Arial, sans-serif;
}
.grid th {
    height: 19px;
    padding: 0;
    border-right: 1px solid #ccc;
    border-bottom: 2px solid #c6c6c6;
    background: linear-gradient(#fdfdfd, #e9ebed);
    font-size: 11px;
    font-weight: 400;
    color: #555;
    white-space: nowrap;
    overflow: hidden;
}
.sort::after {
    content: "";
    display: inline-block;
    width: 6px;
    height: 8px;
    margin-left: 2px;
    background: #c2c2c2;
    clip-path: polygon(50% 0, 100% 40%, 0 40%, 0 60%, 100% 60%, 50% 100%, 0 60%, 0 40%);
}
.grid td {
    height: 22px;
    padding: 0 4px;
    border-right: 1px dotted #ccc;
    border-bottom: 1px solid #ccc;
    text-align: right;
    white-space: nowrap;
    overflow: hidden;
}
.grid tr:nth-child(even) td {
    background: #fafafa;
}
/* every third row takes the spare pixel */
.grid tr:nth-child(3n + 2) td {
    height: 23px;
}
.grid td:first-child {
    padding-left: 5px;
    text-align: left;
}
.grid tr.sel td {
    background: #f5f5dc;
}
.grid td.dash {
    text-align: center;
    font-weight: 700;
    color: #777;
}

/* Scroll bars */
.vscroll {
    position: absolute;
    top: 20px;
    right: 0;
    bottom: 0;
    width: 15px;
    padding: 6px 1px;
    display: flex;
    flex-direction: column;
    align-items: center;
    background: #f0f0f0;
}
.vscroll b {
    width: 12px;
    height: 18px;
    margin-top: 5px;
    background: #858585;
}
.vscroll .down {
    margin-top: auto;
}
.arr {
    width: 6px;
    height: 4px;
    background: #858585;
}
.arr.up {
    clip-path: polygon(50% 0, 100% 100%, 0 100%);
}
.arr.down {
    clip-path: polygon(0 0, 100% 0, 50% 100%);
}
.arr.prev, .arr.next {
    width: 4px;
    height: 6px;
}
.arr.prev {
    clip-path: polygon(0 50%, 100% 0, 100% 100%);
}
.arr.next {
    clip-path: polygon(0 0, 100% 50%, 0 100%);
}
.hscroll {
    display: flex;
    align-items: center;
    gap: 6px;
    height: 15px;
    padding: 0 5px;
    background: #f0f0f0;
}
.hscroll b {
    height: 12px;
    background: #858585;
}

/* World map */
.world-map {
    width: 100%;
    height: 100%;
}
.world-zoom {
    position: absolute;
    left: 6px;
    top: 5px;
    display: grid;
    gap: 2px;
}
.world-zoom button {
    width: 20px;
    height: 20px;
    padding: 0;
    border: 1px solid #ccc;
    background: #fff;
    font-size: 20px;
    line-height: 16px;
    font-weight: 600;
    color: #333;
}
.legend {
    position: absolute;
    left: 18px;
    bottom: 6px;
    display: flex;
    align-items: center;
    gap: 4px;
    font-size: 11px;
    font-weight: 700;
}
.legend i {
    width: 90px;
    height: 6px;
    background: linear-gradient(90deg, #eef2f4, #6a90a0);
}

/* Right side */
.right {
    flex: 1;
    min-width: 0;
    display: flex;
    flex-direction: column;
}
.right-body {
    flex: 1;
    display: grid;
    grid-template-columns: 1fr 1fr;
    grid-template-rows: 468px auto;
    align-content: start;
    gap: 5px 6px;
    padding: 8px 9px 0;
}
.card {
    min-width: 0;
    display: flex;
    flex-direction: column;
    border: 1px solid #ccc;
    border-bottom-width: 2px;
}
.card-head {
    display: flex;
    height: 30px;
    flex: none;
    background: #fafafa;
    border-bottom: 1px solid #ccc;
}
.card-head .tool, .inner .tool {
    border-left-color: #e5e5e5;
}
h3 {
    padding-left: 9px;
    font-size: 13px;
    line-height: 29px;
}
.select-loc {
    width: 114px;
    padding: 0;
}
.select-loc svg {
    margin-left: 3px;
}
.inner {
    flex: none;
    height: 30px;
}
.inner .tab {
    padding: 6px 13px;
}
.inner .tab.active {
    margin-left: -1px;
}
.map {
    position: relative;
    flex: 1;
    min-height: 0;
    overflow: hidden;
}
.map-svg {
    position: absolute;
    width: 100%;
    height: 100%;
}
.map-svg text {
    font-family: "Open Sans", sans-serif;
}
.region text {
    font-size: 24px;
    fill: #1d6b25;
    fill-opacity: 0.5;
}
.map-svg .country {
    font-size: 76px;
    fill: #1d6b25;
    fill-opacity: 0.4;
}
.sea text {
    font-size: 29px;
    font-style: italic;
    fill: #4a6cb5;
}
.map-svg .sea .big {
    font-size: 40px;
}
.place text, .val text {
    font-size: 27px;
    stroke: #fff;
    stroke-opacity: 0.75;
    stroke-width: 4px;
    paint-order: stroke;
}
.map-svg .caps text {
    font-size: 25px;
}
.map-svg .val text {
    font-family: "Liberation Sans", Arial, sans-serif;
    font-size: 33px;
    fill: #333;
    stroke-opacity: 0.5;
}
.map-zoom {
    position: absolute;
    left: 9px;
    top: 9px;
    width: 24px;
    border-radius: 3px;
    background: #fff;
    box-shadow: 0 1px 4px rgba(0, 0, 0, 0.5);
}
.map-zoom button {
    display: block;
    width: 24px;
    height: 23px;
    padding: 0;
    border: 0;
    background: none;
    font: 700 16px/22px "Liberation Sans", Arial, sans-serif;
    color: #000;
}
.map-zoom button + button {
    border-top: 1px solid #ccc;
}
.ruler, .layers {
    position: absolute;
    width: 32px;
    height: 32px;
    padding: 0;
    border: 0;
    border-radius: 4px;
    background: #fff;
    box-shadow: 0 1px 4px rgba(0, 0, 0, 0.4);
}
.ruler {
    left: 9px;
    top: 64px;
}
.layers {
    right: 9px;
    top: 45px;
    padding: 3px;
}
.map-search {
    position: absolute;
    top: 9px;
    right: 9px;
    width: 269px;
    height: 26px;
    padding: 0 7px;
    border: 1px solid #ccc;
    border-radius: 4px;
    font: 11px "Liberation Sans", Arial, sans-serif;
}
.latlng, .attribution {
    position: absolute;
    right: 0;
    bottom: 0;
    padding: 0 5px;
    background: rgba(255, 255, 255, 0.7);
    font: 10px/15px "Liberation Sans", Arial, sans-serif;
}
.latlng {
    right: 9px;
    bottom: 25px;
    padding: 0;
    font-size: 11px;
}
.attribution a {
    color: #0078a8;
}

/* Reports */
.framed {
    flex: 1;
    display: flex;
    flex-direction: column;
    margin: 2px;
    border: 1px solid #ccc;
    border-bottom-width: 2px;
}
.c-ico {
    width: 18px;
}
.report-grid th div {
    display: flex;
    align-items: center;
    height: 17px;
}
.report-grid th span {
    flex: 1;
    min-width: 0;
    overflow: hidden;
}
.report-grid th button {
    width: 16px;
    height: 17px;
    padding: 0;
    flex: none;
    border: 0;
    border-left: 1px solid #ccc;
    background: none;
}
.report-grid th button::before {
    content: "";
    display: block;
    width: 6px;
    height: 4px;
    margin: 1px auto 0;
    background: #333;
    clip-path: polygon(0 0, 100% 0, 50% 100%);
}
.grid td.info, .grid td.copy, .grid td.del, .grid td.ok {
    padding: 0 0 0 4px;
}
.report-grid td svg {
    width: 10px;
    height: 10px;
}
.info {
    color: #0000f0;
}
.copy {
    color: #777;
}
.del {
    color: #f00;
}
.ok {
    color: #008000;
}
.report-grid td:nth-child(5) {
    text-align: left;
    padding-left: 5px;
}
.report-grid td:nth-child(6) {
    text-align: center;
}
.report-grid .focus {
    outline: 1px solid #888;
    outline-offset: -1px;
}
.lim {
    display: block;
    height: 18px;
    line-height: 18px;
    font-weight: 700;
    color: #fff;
}
.good {
    background: #008000;
}
.warn {
    background: #ffa500;
}
.rep-scroll {
    margin-top: auto;
}
.rep-scroll span {
    width: 24px;
}
.rep-scroll b, .pml-scroll b {
    flex: 1;
}
.report-foot {
    display: flex;
    align-items: center;
    gap: 4px;
    height: 40px;
    margin-top: 2px;
    padding: 0 4px;
    border-top: 1px solid #ccc;
    background: #fafafa;
}
.report-foot .btn {
    height: 30px;
    padding: 0 11px;
    font-size: 12px;
}
.report-foot .sq {
    width: 35px;
    padding: 0;
}
.report-foot .run {
    margin-left: auto;
}

/* PML results */
.pml {
    grid-column: 1 / 3;
}
.push {
    margin-left: auto;
}
.status {
    width: 117px;
    line-height: 16px;
    background: #739e73;
    color: #fff;
    font-size: 11px;
    font-weight: 700;
    text-align: center;
}
.total {
    gap: 4px;
}
.total select {
    width: 125px;
}
.total b {
    margin-left: 2px;
    font-size: 11px;
}
.last2 {
    gap: 4px;
}
.small {
    padding: 0 6px;
}
.clipper {
    position: relative;
    height: 174px;
    overflow: hidden;
}
.pml-grid td:first-child {
    padding-left: 19px;
}
.pml-grid td:nth-child(3) {
    text-align: left;
}
.pml-grid td:last-child {
    padding-right: 0;
}
.pml-grid small {
    font-size: 8px;
    color: #888;
}
.grid tr.group td {
    background: #c0c0c0;
    border-right-color: #c0c0c0;
    font-weight: 700;
}
.grid tr.group td:first-child {
    padding-left: 4px;
    overflow: visible;
}
.group a {
    color: #b0103a;
    text-decoration: underline;
}
.pml-scroll {
    padding-right: 20px;
}
.pml-scroll b {
    margin-right: 300px;
}
```
